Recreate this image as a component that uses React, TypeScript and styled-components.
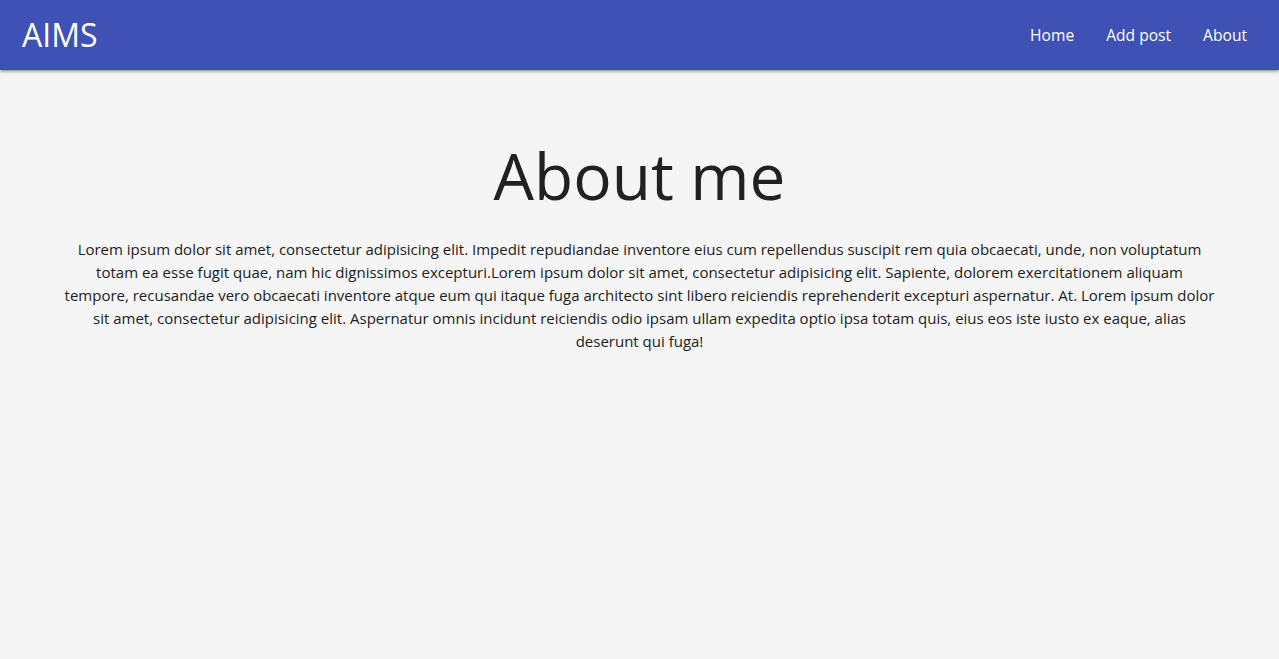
import React from "react";
import styled, { createGlobalStyle } from "styled-components";

const GlobalStyle = createGlobalStyle`
  html, body { margin: 0; padding: 0; }
  body {
    background: #f5f5f5;
    font-family: "Open Sans", "Noto Sans", sans-serif;
    color: #212121;
  }
  * { box-sizing: border-box; }
`;

const Page = styled.div`
  min-height: 659px;
  background: #f5f5f5;
`;

const NavBar = styled.header`
  height: 70px;
  background: #3f51b5;
  display: flex;
  align-items: center;
  justify-content: space-between;
  padding: 0 16px 0 22px;
  box-shadow: 0 2px 2px 0 rgba(0, 0, 0, 0.14), 0 3px 1px -2px rgba(0, 0, 0, 0.12),
    0 1px 5px 0 rgba(0, 0, 0, 0.2);
`;

const Brand = styled.a`
  color: #ffffff;
  font-size: 32px;
  line-height: 70px;
  text-decoration: none;
`;

const NavList = styled.nav`
  display: flex;
  height: 100%;
`;

const NavLink = styled.a`
  color: #ffffff;
  font-size: 15.6px;
  line-height: 70px;
  padding: 0 16px;
  text-decoration: none;
`;

const Container = styled.main`
  width: 90%;
  margin: 0 auto;
  padding-top: 71px;
  text-align: center;
`;

const Title = styled.h1`
  margin: 0 0 27px;
  font-size: 64px;
  line-height: 70px;
  font-weight: 400;
  color: #212121;
`;

const Text = styled.p`
  margin: 0;
  font-size: 15px;
  line-height: 23px;
  color: #212121;
`;

export default function App() {
  return (
    <Page>
      <GlobalStyle />
      <NavBar>
        <Brand href="#">AIMS</Brand>
        <NavList>
          <NavLink href="#">Home</NavLink>
          <NavLink href="#">Add post</NavLink>
          <NavLink href="#">About</NavLink>
        </NavList>
      </NavBar>
      <Container>
        <Title>About me</Title>
        <Text>
          Lorem ipsum dolor sit amet, consectetur adipisicing elit. Impedit repudiandae inventore eius cum
          repellendus suscipit rem quia obcaecati, unde, non voluptatum totam ea esse fugit quae, nam hic
          dignissimos excepturi.Lorem ipsum dolor sit amet, consectetur adipisicing elit. Sapiente, dolorem
          exercitationem aliquam tempore, recusandae vero obcaecati inventore atque eum qui itaque fuga
          architecto sint libero reiciendis reprehenderit excepturi aspernatur. At. Lorem ipsum dolor sit amet,
          consectetur adipisicing elit. Aspernatur omnis incidunt reiciendis odio ipsam ullam expedita optio
          ipsa totam quis, eius eos iste iusto ex eaque, alias deserunt qui fuga!
        </Text>
      </Container>
    </Page>
  );
}
